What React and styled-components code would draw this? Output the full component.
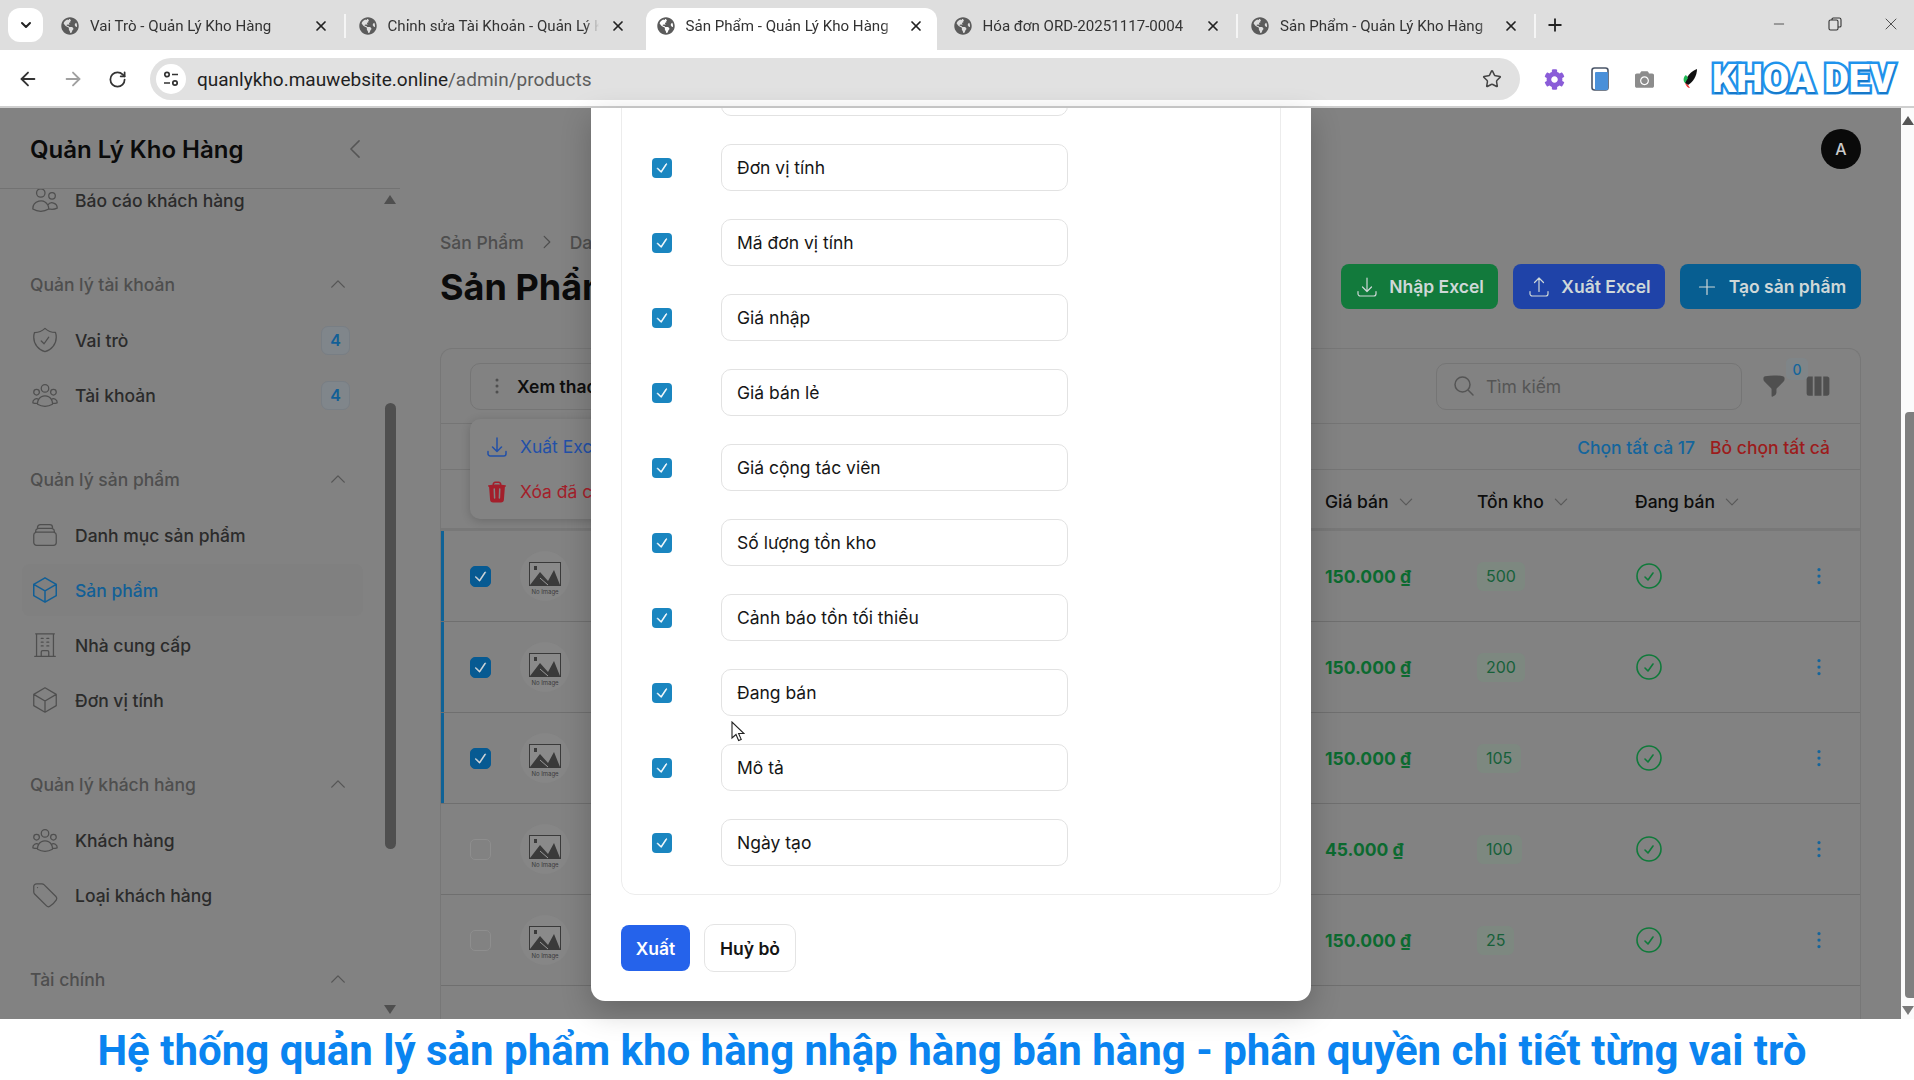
import styled, { createGlobalStyle } from "styled-components";
import {
  HiOutlineChevronLeft,
  HiOutlineChevronUp,
  HiOutlineChevronDown,
  HiOutlineChevronRight,
  HiEllipsisVertical,
  HiFunnel,
  HiViewColumns,
  HiTrash,
  HiOutlineUsers,
  HiOutlineUserGroup,
  HiOutlineShieldCheck,
  HiOutlineRectangleStack,
  HiOutlineCube,
  HiOutlineBuildingOffice,
  HiOutlineTag,
  HiOutlineArrowDownTray,
  HiOutlineArrowUpTray,
  HiOutlinePlus,
  HiOutlineMagnifyingGlass,
  HiOutlineCheckCircle,
  HiCheck,
} from "react-icons/hi2";
import { FaGlobeAmericas, FaCog, FaCamera } from "react-icons/fa";
import { X, ArrowLeft, ArrowRight, RotateCw, Star, Plus, Minus, ChevronDown } from "lucide-react";

const GlobalStyle = createGlobalStyle`
  html, body { margin: 0; padding: 0; height: 100%; overflow: hidden; background: #fff; }
  * { box-sizing: border-box; }
  body { font-family: Inter, "Noto Sans", sans-serif; }
`;

const Shell = styled.div`
  width: 1914px;
  height: 1080px;
  display: flex;
  flex-direction: column;
  overflow: hidden;
`;

/* browser chrome */
const TabStrip = styled.div`
  height: 50px;
  flex: none;
  background: #dedede;
  display: flex;
  align-items: flex-end;
  padding-left: 8px;
  font-family: Roboto, "Open Sans", sans-serif;
`;

const TabSearch = styled.div`
  width: 35px;
  height: 34px;
  margin: 0 5px 8px 0;
  background: #fff;
  border-radius: 12px;
  display: flex;
  align-items: center;
  justify-content: center;
  color: #222;
`;

const Tab = styled.div`
  position: relative;
  width: ${(p) => (p.$active ? "291px" : "297.5px")};
  height: 42px;
  margin: ${(p) => (p.$active ? "0 4px 0 2.5px" : "0")};
  padding: ${(p) => (p.$active ? "0 13px 6px 11px" : "0 17px 6px 13px")};
  display: flex;
  align-items: center;
  gap: 11px;
  color: #333;
  background: ${(p) => (p.$active ? "#fff" : "transparent")};
  border-radius: 12px 12px 0 0;
  font-size: 15.1px;

  &::after {
    content: "";
    display: ${(p) => (p.$sep ? "block" : "none")};
    position: absolute;
    right: 0;
    top: 6px;
    height: 24px;
    width: 2px;
    background: #f5f5f5;
  }
`;

const TabTitle = styled.span`
  flex: 1;
  white-space: nowrap;
  overflow: hidden;
  mask-image: linear-gradient(to right, #000 calc(100% - 14px), transparent);
`;

const NewTab = styled.div`
  margin: 0 0 15px 9px;
  color: #222;
  display: flex;
`;

const WindowButtons = styled.div`
  margin-left: auto;
  height: 50px;
  padding-bottom: 2px;
  display: flex;
  align-items: center;
  gap: 10px;
  color: #333;
`;

const WindowButton = styled.div`
  width: 46px;
  display: flex;
  justify-content: center;
`;

const Toolbar = styled.div`
  height: 58px;
  flex: none;
  background: #fff;
  border-bottom: 2px solid #cfcfcf;
  display: flex;
  align-items: center;
  padding: 2px 0 0 5px;
  font-family: Roboto, "Open Sans", sans-serif;
`;

const NavButton = styled.div`
  width: 45px;
  display: flex;
  justify-content: center;
  color: ${(p) => (p.$muted ? "#a0a0a0" : "#333")};
`;

const AddressBar = styled.div`
  flex: 1;
  height: 42px;
  margin-left: 10px;
  border-radius: 21px;
  background: #e1e1e1;
  display: flex;
  align-items: center;
  padding: 0 18px 0 6px;
`;

const SiteInfo = styled.div`
  width: 30px;
  height: 30px;
  border-radius: 50%;
  background: #fff;
  display: flex;
  align-items: center;
  justify-content: center;
  margin-right: 11px;
`;

const Url = styled.div`
  flex: 1;
  font-size: 19px;
  color: #1f1f1f;
  span { color: #5d5d5d; }
`;

const Extensions = styled.div`
  display: flex;
  align-items: center;
  padding: 0 16px 0 12px;
`;

const Extension = styled.div`
  width: 45px;
  display: flex;
  justify-content: center;
  color: ${(p) => p.$color};
`;

const LogoText = styled.div`
  width: 186px;
  font-family: Roboto, sans-serif;
  font-weight: 900;
  font-size: 38px;
  line-height: 42px;
  white-space: nowrap;
  color: #fff;
  -webkit-text-stroke: 5px #1f93ec;
  paint-order: stroke fill;
  text-shadow: 1px 2px 0 #1678c8;
`;

/* page under the dialog */
const Viewport = styled.div`
  flex: 1;
  min-height: 0;
  position: relative;
  display: flex;
`;

const Page = styled.div`
  flex: 1;
  min-width: 0;
  display: flex;
  background: #828282;
`;

const PageScroll = styled.div`
  width: 13px;
  flex: none;
  background: #fbfbfb;
  display: flex;
  flex-direction: column;
  align-items: flex-end;
`;

const PageThumb = styled.div`
  width: 9px;
  height: 586px;
  margin-top: 304px;
  background: #7f7f7f;
  border-radius: 4px 0 0 4px;
`;

const ArrowUp = styled.div`
  width: 0;
  height: 0;
  flex: none;
  border: 6px solid transparent;
  border-top: 0;
  border-bottom: 9px solid ${(p) => p.$color};
`;

const ArrowDown = styled(ArrowUp)`
  border: 6px solid transparent;
  border-bottom: 0;
  border-top: 9px solid ${(p) => p.$color};
`;

const PageArrowUp = styled(ArrowUp)`
  margin: 8px 0 -17px;
  align-self: center;
`;

const PageArrowDown = styled(ArrowDown)`
  margin-top: 8px;
  align-self: center;
`;

const Sidebar = styled.aside`
  width: 400px;
  flex: none;
  display: flex;
  flex-direction: column;
`;

const SideHead = styled.div`
  height: 81px;
  flex: none;
  border-bottom: 1px solid #727272;
  display: flex;
  align-items: center;
  justify-content: space-between;
  padding: 2px 32px 0 30px;
`;

const Brand = styled.div`
  font-size: 24px;
  font-weight: 600;
  color: #0b0b0b;
`;

const SideBody = styled.div`
  flex: 1;
  min-height: 0;
  display: flex;
`;

const Nav = styled.nav`
  flex: 1;
  min-width: 0;
  overflow: hidden;
  padding: 0 21px 0 22px;
`;

const NavInner = styled.div`
  margin-top: -15px;
`;

const Group = styled.div`
  margin-top: 32px;
  display: flex;
  flex-direction: column;
  gap: 3px;
`;

const GroupTitle = styled.div`
  height: 52px;
  margin-bottom: 1px;
  padding: 0 15px 0 8px;
  display: flex;
  align-items: center;
  justify-content: space-between;
  font-size: 17.5px;
  font-weight: 500;
  color: #4e4e4e;
`;

const Item = styled.div`
  height: 52px;
  padding: 0 13px 0 8px;
  display: flex;
  align-items: center;
  gap: 15px;
  border-radius: 8px;
  font-size: 17.5px;
  font-weight: 500;
  color: ${(p) => (p.$active ? "#125f96" : "#2b2b2b")};
  background: ${(p) => (p.$active ? "#808080" : "transparent")};

  svg { flex: none; color: ${(p) => (p.$active ? "#125f96" : "#4f4f4f")}; }
`;

const ItemLabel = styled.span`
  flex: 1;
`;

const CountBadge = styled.span`
  width: 29px;
  height: 29px;
  border-radius: 7px;
  border: 1px solid #787e84;
  background: #80868b;
  color: #125f96;
  font-size: 16px;
  font-weight: 600;
  display: flex;
  align-items: center;
  justify-content: center;
`;

const SideTrack = styled.div`
  width: 12px;
  flex: none;
  margin-right: 4px;
  display: flex;
  flex-direction: column;
  align-items: center;
`;

const SideArrowUp = styled(ArrowUp)`
  margin-top: 6px;
`;

const SideThumb = styled.div`
  width: 11px;
  height: 446px;
  margin-top: 199px;
  background: #4f4f4f;
  border-radius: 6px;
`;

const SideArrowDown = styled(ArrowDown)`
  margin-top: 156px;
`;

const Main = styled.main`
  flex: 1;
  min-width: 0;
  padding: 0 40px;
  display: flex;
  flex-direction: column;
`;

const TopBar = styled.div`
  height: 81px;
  flex: none;
  display: flex;
  align-items: center;
  justify-content: flex-end;
`;

const Avatar = styled.div`
  width: 40px;
  height: 40px;
  border-radius: 50%;
  background: #0a0a0a;
  color: #c9c9c9;
  font-size: 16px;
  font-weight: 500;
  display: flex;
  align-items: center;
  justify-content: center;
`;

const PageHead = styled.div`
  flex: none;
  margin-top: 40px;
  display: flex;
  align-items: flex-end;
  justify-content: space-between;
`;

const Breadcrumb = styled.div`
  height: 26px;
  display: flex;
  align-items: center;
  gap: 14px;
  font-size: 17.5px;
  font-weight: 500;
  color: #4e4e4e;
`;

const PageTitle = styled.h1`
  margin: 10px 0 0;
  font-size: 36px;
  line-height: 44px;
  font-weight: 700;
  color: #0b0b0b;
`;

const HeadActions = styled.div`
  display: flex;
  gap: 15px;
`;

const ActionButton = styled.div`
  height: 45px;
  width: ${(p) => p.$width}px;
  border-radius: 8px;
  background: ${(p) => p.$bg};
  color: #cfd8d8;
  font-size: 17.5px;
  font-weight: 600;
  display: flex;
  align-items: center;
  justify-content: center;
  gap: 10px;
`;

const TableCard = styled.section`
  position: relative;
  flex: 1;
  margin-top: 39px;
  border: 1px solid #777;
  border-bottom: 0;
  border-radius: 12px 12px 0 0;
`;

const CardToolbar = styled.div`
  height: 75px;
  padding: 0 28px 0 29px;
  display: flex;
  align-items: center;
  justify-content: space-between;
  border-bottom: 1px solid #757575;
`;

const BulkButton = styled.div`
  width: 230px;
  height: 47px;
  border: 1px solid #757575;
  border-radius: 10px;
  padding-left: 14px;
  display: flex;
  align-items: center;
  gap: 8px;
  font-size: 17.5px;
  font-weight: 600;
  color: #0e0e0e;
  svg { color: #4f4f4f; }
`;

const TableTools = styled.div`
  display: flex;
  align-items: center;
`;

const SearchBox = styled.div`
  width: 306px;
  height: 47px;
  border: 1px solid #757575;
  border-radius: 10px;
  padding-left: 15px;
  display: flex;
  align-items: center;
  gap: 10px;
  font-size: 17.5px;
  color: #555;
  margin-right: 19px;
`;

const FilterWrap = styled.div`
  position: relative;
  display: flex;
  margin-right: 17px;
  color: #4f4f4f;
`;

const FilterCount = styled.span`
  position: absolute;
  left: 25px;
  top: -15px;
  width: 22px;
  height: 22px;
  border-radius: 5px;
  background: #7f8588;
  color: #14659c;
  font-size: 14px;
  font-weight: 500;
  display: flex;
  align-items: center;
  justify-content: center;
`;

const ColumnsIcon = styled.div`
  display: flex;
  color: #4f4f4f;
`;

const SelectionBar = styled.div`
  height: 46px;
  padding: 2px 30px 0 0;
  display: flex;
  align-items: center;
  justify-content: flex-end;
  gap: 15px;
  font-size: 17.5px;
  font-weight: 500;
  border-bottom: 1px solid #757575;
`;

const SelectionLink = styled.span`
  color: ${(p) => p.$color};
`;

const BulkMenu = styled.div`
  position: absolute;
  left: 29px;
  top: 70px;
  width: 220px;
  height: 100px;
  border-radius: 10px;
  background: #838383;
  box-shadow: 0 2px 10px rgba(0, 0, 0, 0.18);
  padding: 5px 0 0 15px;
  display: flex;
  flex-direction: column;
`;

const MenuEntry = styled.div`
  height: 45px;
  display: flex;
  align-items: center;
  gap: 11px;
  font-size: 17.5px;
  color: ${(p) => p.$color};
`;

const HeaderRow = styled.div`
  height: 61px;
  padding-top: 5px;
  display: grid;
  grid-template-columns: 884px 152px 158px 1fr auto;
  align-items: center;
  border-bottom: 3px solid #787878;
  font-size: 17.5px;
  font-weight: 500;
  color: #0d0d0d;
`;

const HeaderCell = styled.div`
  grid-column: ${(p) => p.$col};
  display: flex;
  align-items: center;
  gap: 8px;
  svg { color: #595959; }
`;

const Row = styled.div`
  height: 91px;
  display: grid;
  grid-template-columns: 884px 152px 158px 1fr auto;
  align-items: center;
  border-bottom: 1px solid #6f6f6f;
  box-shadow: ${(p) => (p.$selected ? "inset 3px 0 0 #0f6296" : "none")};
`;

const RowLead = styled.div`
  display: flex;
  align-items: center;
  padding-left: 29px;
  gap: 28px;
`;

const RowCheck = styled.div`
  width: 21px;
  height: 21px;
  border-radius: 5px;
  background: ${(p) => (p.$checked ? "#075a92" : "#828282")};
  border: 1px solid ${(p) => (p.$checked ? "#075a92" : "#8e8e8e")};
  color: #ddd;
  display: flex;
  align-items: center;
  justify-content: center;
`;

const Price = styled.div`
  font-size: 17.5px;
  font-weight: 700;
  color: #0c6a30;
`;

const StockBadge = styled.span`
  display: inline-block;
  height: 29px;
  padding: 0 9px;
  border-radius: 6px;
  background: #7d8880;
  color: #17603a;
  font-size: 16px;
  line-height: 29px;
`;

const StatusIcon = styled.div`
  display: flex;
  margin-left: -2px;
  color: #0f7a3a;
`;

const RowAction = styled.div`
  display: flex;
  padding-right: 28px;
  color: #14659c;
`;

/* dialog */
const Modal = styled.div`
  position: absolute;
  left: 591px;
  top: 0;
  width: 720px;
  height: 893px;
  overflow: hidden;
  background: #fff;
  border-radius: 0 0 14px 14px;
  box-shadow: 0 10px 30px rgba(0, 0, 0, 0.22);
  padding: 0 30px 29px;
  display: flex;
  flex-direction: column;
  justify-content: flex-end;
  gap: 29px;
`;

const FieldCard = styled.div`
  flex: none;
  border: 1px solid #ececec;
  border-radius: 14px;
  padding: 30px 0 28px 30px;
  display: flex;
  flex-direction: column;
  gap: 28px;
`;

const FieldRow = styled.div`
  display: flex;
  align-items: center;
  gap: 49px;
`;

const FieldCheck = styled.div`
  width: 20px;
  height: 20px;
  border-radius: 4px;
  background: #1a86c0;
  color: #fff;
  display: flex;
  align-items: center;
  justify-content: center;
`;

const FieldInput = styled.div`
  width: 347px;
  height: 47px;
  border: 1px solid #e2e2e2;
  border-radius: 10px;
  padding-left: 15px;
  display: flex;
  align-items: center;
  font-size: 17.5px;
  color: #161616;
`;

const ModalActions = styled.div`
  flex: none;
  display: flex;
  align-items: center;
  gap: 14px;
`;

const ExportButton = styled.div`
  width: 69px;
  height: 46px;
  border-radius: 8px;
  background: #2563eb;
  color: #fff;
  font-size: 17.5px;
  font-weight: 600;
  display: flex;
  align-items: center;
  justify-content: center;
`;

const CancelButton = styled.div`
  width: 92px;
  height: 48px;
  border: 1px solid #e4e4e4;
  border-radius: 10px;
  color: #141414;
  font-size: 17.5px;
  font-weight: 600;
  display: flex;
  align-items: center;
  justify-content: center;
`;

const PointerMark = styled.svg`
  position: absolute;
  left: 731px;
  top: 613px;
`;

const Caption = styled.div`
  height: 61px;
  flex: none;
  background: #fff;
  padding: 2px 10px 0 0;
  display: flex;
  align-items: center;
  justify-content: center;
  font-family: Roboto, sans-serif;
  font-weight: 700;
  font-size: 42px;
  color: #0a84f0;
  white-space: nowrap;
`;

const tabs = [
  { title: "Vai Trò - Quản Lý Kho Hàng", sep: true },
  { title: "Chỉnh sửa Tài Khoản - Quản Lý Kho Hàng" },
  { title: "Sản Phẩm - Quản Lý Kho Hàng", active: true },
  { title: "Hóa đơn ORD-20251117-0004", sep: true },
  { title: "Sản Phẩm - Quản Lý Kho Hàng", sep: true },
];

const fields = [
  "Tên sản phẩm",
  "Đơn vị tính",
  "Mã đơn vị tính",
  "Giá nhập",
  "Giá bán lẻ",
  "Giá cộng tác viên",
  "Số lượng tồn kho",
  "Cảnh báo tồn tối thiểu",
  "Đang bán",
  "Mô tả",
  "Ngày tạo",
];

const products = [
  { price: "150.000 ₫", stock: 500, selected: true },
  { price: "150.000 ₫", stock: 200, selected: true },
  { price: "150.000 ₫", stock: 105, selected: true },
  { price: "45.000 ₫", stock: 100 },
  { price: "150.000 ₫", stock: 25 },
];

function TuneIcon() {
  return (
    <svg width="18" height="18" viewBox="0 0 18 18" fill="none" stroke="#333" strokeWidth="1.7">
      <circle cx="5" cy="4.5" r="2.2" />
      <path d="M10 4.5h6M2 13h6" />
      <circle cx="13" cy="13" r="2.2" />
    </svg>
  );
}

function RestoreIcon() {
  return (
    <svg width="14" height="14" viewBox="0 0 14 14" fill="none" stroke="#333" strokeWidth="1.1">
      <rect x="1" y="3" width="9" height="10" rx="1.5" />
      <path d="M4 3V2.2C4 1.5 4.5 1 5.2 1h6.1c.9 0 1.7.8 1.7 1.7V9c0 .7-.5 1-1.5 1H10" />
    </svg>
  );
}

function PhoneIcon() {
  return (
    <svg width="18" height="24" viewBox="0 0 18 24">
      <rect x="1" y="1" width="16" height="22" rx="2.5" fill="#fff" stroke="#4a5568" strokeWidth="1.6" />
      <rect x="4" y="5" width="13" height="18" rx="1" fill="#4a90d9" />
    </svg>
  );
}

function PaintIcon() {
  return (
    <svg width="18" height="22" viewBox="0 0 18 22">
      <path d="M16 1C10 3 5 9 4 15l3 2c5-3 9-9 9-16z" fill="#111" />
      <path d="M4 15c-2-2-2-6 1-8l2 3z" fill="#1eb954" />
      <path d="M4 15c1 3 3 5 5 5l-2-3z" fill="#e33" />
    </svg>
  );
}

function NoImage() {
  return (
    <svg width="52" height="52" viewBox="0 0 52 52">
      <circle cx="26" cy="26" r="25" fill="#868686" />
      <rect x="10.5" y="12.5" width="31" height="23" fill="#8a8a8a" stroke="#3a3a3a" />
      <rect x="15" y="16" width="3" height="4" fill="#3a3a3a" />
      <path d="M11 35l10-13 8 9 6-11 6 15z" fill="#3a3a3a" />
      <path d="M21 28l8 7" stroke="#9a9a9a" strokeWidth="1" />
      <text x="26" y="44" fontSize="6" textAnchor="middle" fill="#3a3a3a">No Image</text>
    </svg>
  );
}

function GroupChevron() {
  return <HiOutlineChevronUp size={20} strokeWidth={1.6} color="#555" />;
}

export default function App() {
  return (
    <Shell>
      <GlobalStyle />
      <TabStrip>
        <TabSearch>
          <ChevronDown size={16} strokeWidth={3} />
        </TabSearch>
        {tabs.map((tab, i) => (
          <Tab key={i} $active={tab.active} $sep={tab.sep}>
            <FaGlobeAmericas size={18} color="#5b5b5b" />
            <TabTitle>{tab.title}</TabTitle>
            <X size={16} strokeWidth={2.6} color="#222" />
          </Tab>
        ))}
        <NewTab>
          <Plus size={20} strokeWidth={2.2} />
        </NewTab>
        <WindowButtons>
          <WindowButton>
            <Minus size={16} strokeWidth={1.2} />
          </WindowButton>
          <WindowButton>
            <RestoreIcon />
          </WindowButton>
          <WindowButton>
            <X size={20} strokeWidth={1} />
          </WindowButton>
        </WindowButtons>
      </TabStrip>

      <Toolbar>
        <NavButton>
          <ArrowLeft size={22} strokeWidth={2} />
        </NavButton>
        <NavButton $muted>
          <ArrowRight size={22} strokeWidth={2} />
        </NavButton>
        <NavButton>
          <RotateCw size={19} strokeWidth={2.2} />
        </NavButton>
        <AddressBar>
          <SiteInfo>
            <TuneIcon />
          </SiteInfo>
          <Url>
            quanlykho.mauwebsite.online<span>/admin/products</span>
          </Url>
          <Star size={20} strokeWidth={1.8} color="#444" />
        </AddressBar>
        <Extensions>
          <Extension $color="#8a5cd8">
            <FaCog size={21} />
          </Extension>
          <Extension>
            <PhoneIcon />
          </Extension>
          <Extension $color="#8c8c8c">
            <FaCamera size={19} />
          </Extension>
          <Extension>
            <PaintIcon />
          </Extension>
          <LogoText>KHOA DEV</LogoText>
        </Extensions>
      </Toolbar>

      <Viewport>
        <Page>
          <Sidebar>
            <SideHead>
              <Brand>Quản Lý Kho Hàng</Brand>
              <HiOutlineChevronLeft size={26} strokeWidth={1.4} color="#555" />
            </SideHead>
            <SideBody>
              <Nav>
                <NavInner>
                  <Item>
                    <HiOutlineUsers size={30} strokeWidth={1} />
                    <ItemLabel>Báo cáo khách hàng</ItemLabel>
                  </Item>
                  <Group>
                    <GroupTitle>
                      Quản lý tài khoản
                      <GroupChevron />
                    </GroupTitle>
                    <Item>
                      <HiOutlineShieldCheck size={30} strokeWidth={1} />
                      <ItemLabel>Vai trò</ItemLabel>
                      <CountBadge>4</CountBadge>
                    </Item>
                    <Item>
                      <HiOutlineUserGroup size={30} strokeWidth={1} />
                      <ItemLabel>Tài khoản</ItemLabel>
                      <CountBadge>4</CountBadge>
                    </Item>
                  </Group>
                  <Group>
                    <GroupTitle>
                      Quản lý sản phẩm
                      <GroupChevron />
                    </GroupTitle>
                    <Item>
                      <HiOutlineRectangleStack size={30} strokeWidth={1} />
                      <ItemLabel>Danh mục sản phẩm</ItemLabel>
                    </Item>
                    <Item $active>
                      <HiOutlineCube size={30} strokeWidth={1.2} />
                      <ItemLabel>Sản phẩm</ItemLabel>
                    </Item>
                    <Item>
                      <HiOutlineBuildingOffice size={30} strokeWidth={1} />
                      <ItemLabel>Nhà cung cấp</ItemLabel>
                    </Item>
                    <Item>
                      <HiOutlineCube size={30} strokeWidth={1} />
                      <ItemLabel>Đơn vị tính</ItemLabel>
                    </Item>
                  </Group>
                  <Group>
                    <GroupTitle>
                      Quản lý khách hàng
                      <GroupChevron />
                    </GroupTitle>
                    <Item>
                      <HiOutlineUserGroup size={30} strokeWidth={1} />
                      <ItemLabel>Khách hàng</ItemLabel>
                    </Item>
                    <Item>
                      <HiOutlineTag size={30} strokeWidth={1} />
                      <ItemLabel>Loại khách hàng</ItemLabel>
                    </Item>
                  </Group>
                  <Group>
                    <GroupTitle>
                      Tài chính
                      <GroupChevron />
                    </GroupTitle>
                  </Group>
                </NavInner>
              </Nav>
              <SideTrack>
                <SideArrowUp $color="#4f4f4f" />
                <SideThumb />
                <SideArrowDown $color="#4f4f4f" />
              </SideTrack>
            </SideBody>
          </Sidebar>

          <Main>
            <TopBar>
              <Avatar>A</Avatar>
            </TopBar>
            <PageHead>
              <div>
                <Breadcrumb>
                  Sản Phẩm
                  <HiOutlineChevronRight size={18} strokeWidth={1.6} />
                  Danh sách
                </Breadcrumb>
                <PageTitle>Sản Phẩm</PageTitle>
              </div>
              <HeadActions>
                <ActionButton $bg="#127a3c" $width={157}>
                  <HiOutlineArrowDownTray size={24} strokeWidth={1.2} />
                  Nhập Excel
                </ActionButton>
                <ActionButton $bg="#1f43a8" $width={152}>
                  <HiOutlineArrowUpTray size={24} strokeWidth={1.2} />
                  Xuất Excel
                </ActionButton>
                <ActionButton $bg="#075e91" $width={181}>
                  <HiOutlinePlus size={24} strokeWidth={1.2} />
                  Tạo sản phẩm
                </ActionButton>
              </HeadActions>
            </PageHead>

            <TableCard>
              <CardToolbar>
                <BulkButton>
                  <HiEllipsisVertical size={24} />
                  Xem thao tác
                </BulkButton>
                <TableTools>
                  <SearchBox>
                    <HiOutlineMagnifyingGlass size={24} />
                    Tìm kiếm
                  </SearchBox>
                  <FilterWrap>
                    <HiFunnel size={26} />
                    <FilterCount>0</FilterCount>
                  </FilterWrap>
                  <ColumnsIcon>
                    <HiViewColumns size={28} />
                  </ColumnsIcon>
                </TableTools>
              </CardToolbar>
              <SelectionBar>
                <SelectionLink $color="#14659c">Chọn tất cả 17</SelectionLink>
                <SelectionLink $color="#9c1c1c">Bỏ chọn tất cả</SelectionLink>
              </SelectionBar>
              <BulkMenu>
                <MenuEntry $color="#2250a8">
                  <HiOutlineArrowDownTray size={24} />
                  Xuất Excel
                </MenuEntry>
                <MenuEntry $color="#a31f2b">
                  <HiTrash size={24} />
                  Xóa đã chọn
                </MenuEntry>
              </BulkMenu>
              <HeaderRow>
                <HeaderCell $col={2}>
                  Giá bán
                  <HiOutlineChevronDown size={18} strokeWidth={1.6} />
                </HeaderCell>
                <HeaderCell $col={3}>
                  Tồn kho
                  <HiOutlineChevronDown size={18} strokeWidth={1.6} />
                </HeaderCell>
                <HeaderCell $col={4}>
                  Đang bán
                  <HiOutlineChevronDown size={18} strokeWidth={1.6} />
                </HeaderCell>
              </HeaderRow>
              {products.map((product, i) => (
                <Row key={i} $selected={product.selected}>
                  <RowLead>
                    <RowCheck $checked={product.selected}>
                      {product.selected && <HiCheck size={15} stroke="currentColor" strokeWidth={1} />}
                    </RowCheck>
                    <NoImage />
                  </RowLead>
                  <Price>{product.price}</Price>
                  <div>
                    <StockBadge>{product.stock}</StockBadge>
                  </div>
                  <StatusIcon>
                    <HiOutlineCheckCircle size={32} strokeWidth={1.2} />
                  </StatusIcon>
                  <RowAction>
                    <HiEllipsisVertical size={26} />
                  </RowAction>
                </Row>
              ))}
            </TableCard>
          </Main>
        </Page>
        <PageScroll>
          <PageArrowUp $color="#555" />
          <PageThumb />
          <PageArrowDown $color="#7a7a7a" />
        </PageScroll>

        <Modal>
          <FieldCard>
            {fields.map((name) => (
              <FieldRow key={name}>
                <FieldCheck>
                  <HiCheck size={14} stroke="currentColor" strokeWidth={1.2} />
                </FieldCheck>
                <FieldInput>{name}</FieldInput>
              </FieldRow>
            ))}
          </FieldCard>
          <ModalActions>
            <ExportButton>Xuất</ExportButton>
            <CancelButton>Huỷ bỏ</CancelButton>
          </ModalActions>
        </Modal>
        <PointerMark width="14" height="22" viewBox="0 0 14 22">
          <path d="M1 1v16l4-3.5 2.6 6 2.6-1.1-2.6-5.9H13z" fill="#fff" stroke="#222" strokeWidth="1.1" />
        </PointerMark>
      </Viewport>

      <Caption>Hệ thống quản lý sản phẩm kho hàng nhập hàng bán hàng - phân quyền chi tiết từng vai trò</Caption>
    </Shell>
  );
}
